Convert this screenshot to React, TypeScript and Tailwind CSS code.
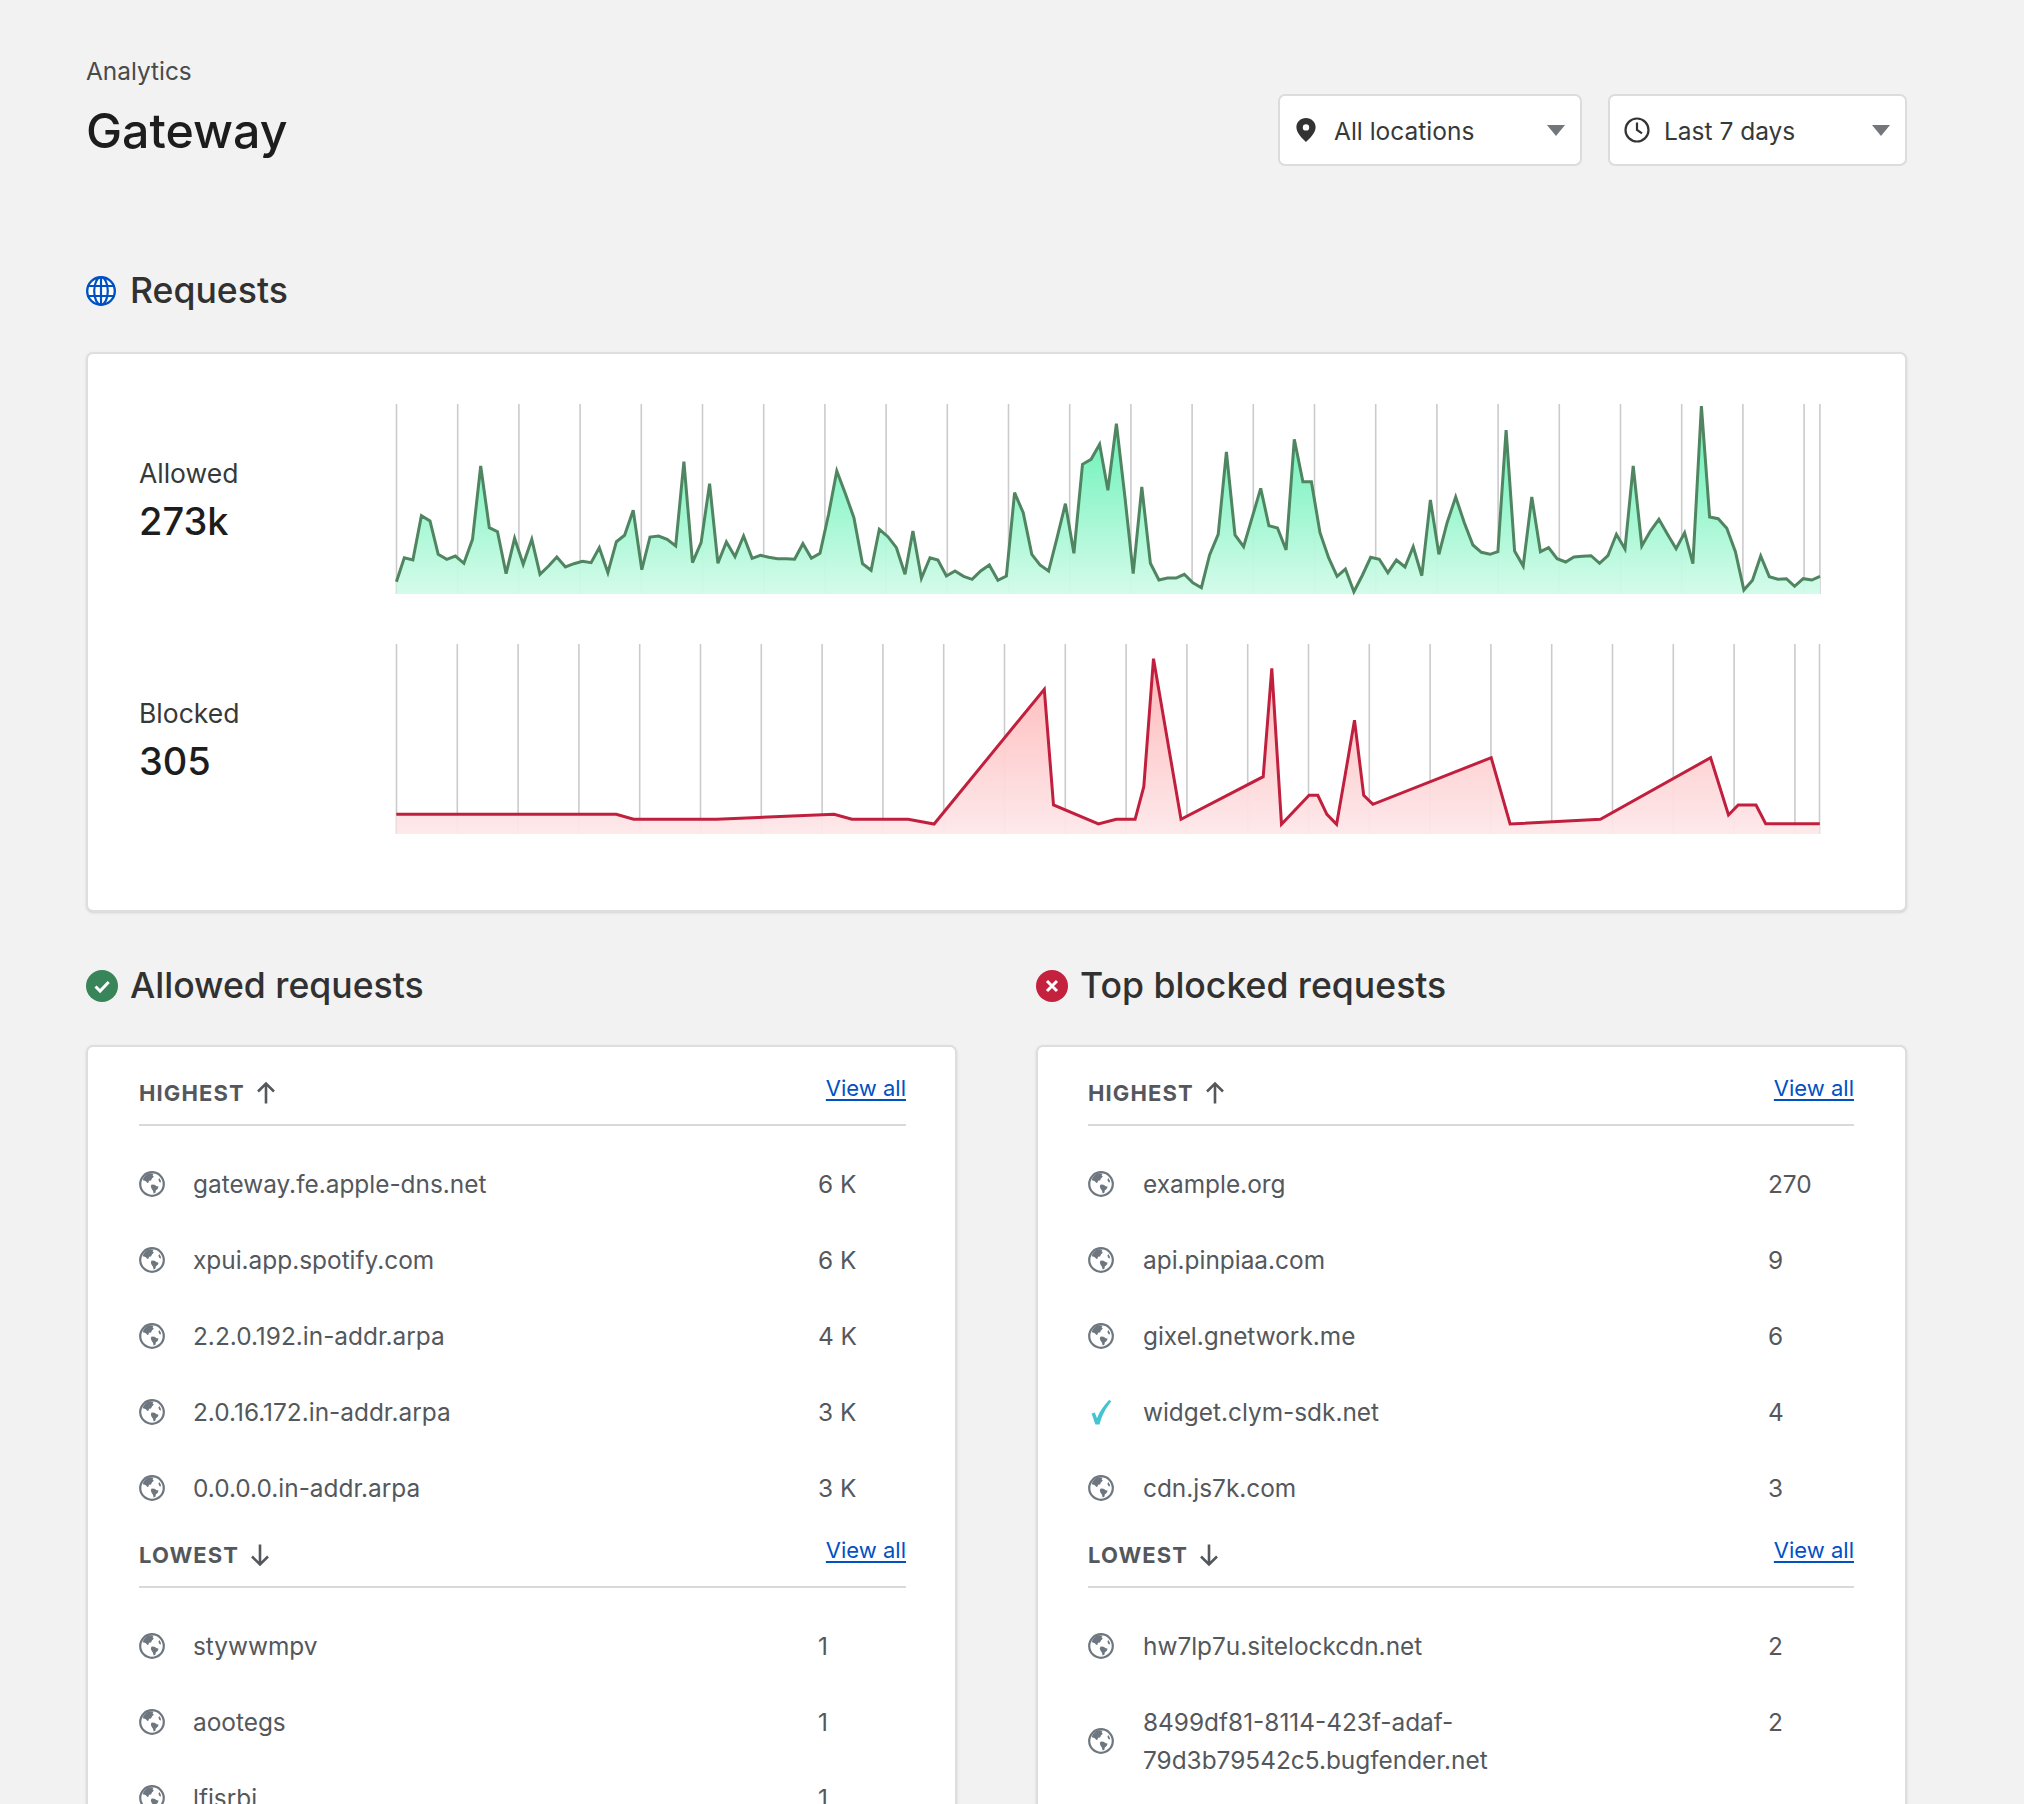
import React from "react";

type P = [number, number];

const GREEN_A: P[] = [[46,572],[68,500],[92,507],[116,374],[140,390],[163,490],[187,505],[211,495],[235,517],[259,445],[282,225],[306,410],[329,422],[353,548],[377,442],[401,520],[425,445],[448,550],[472,525],[495,498],[519,528],[543,518],[567,511],[591,515],[614,470],[638,545],[662,452],[685,433],[709,358],[733,536],[756,438],[780,435],[804,445],[828,465],[851,212],[875,515],[899,455],[923,278],[946,517],[970,453],[994,497],[1018,435],[1042,502],[1065,493],[1089,499],[1113,503],[1137,503],[1161,505],[1184,458],[1208,502],[1232,487],[1256,370],[1279,240],[1303,308],[1327,380],[1351,518],[1375,538],[1398,415],[1422,437],[1446,470],[1470,550],[1492,420],[1516,562],[1540,500]];
const GREEN_B: P[] = [[22,507],[46,555],[70,540],[94,556],[118,565],[142,540],[166,522],[190,568],[214,555],[237,305],[261,365],[285,490],[308,522],[332,540],[356,440],[379,338],[403,487],[427,220],[451,205],[475,160],[498,298],[522,98],[546,320],[569,548],[593,288],[617,517],[641,567],[665,561],[689,561],[712,550],[736,575],[760,590],[783,492],[807,430],[830,183],[854,432],[878,467],[902,380],[926,292],[949,404],[973,411],[997,477],[1020,145],[1044,272],[1068,272],[1092,425],[1116,500],[1140,556],[1163,534],[1187,602],[1211,552]];
const GREEN_C: P[] = [[2,499],[26,505],[50,545],[74,507],[98,528],[121,467],[145,554],[169,327],[193,490],[216,395],[240,318],[264,395],[288,462],[312,484],[336,490],[358,482],[381,117],[405,480],[429,525],[453,318],[477,482],[500,470],[524,503],[548,513],[571,498],[595,496],[619,494],[643,517],[666,494],[690,430],[714,474],[737,225],[761,465],[785,420],[809,385],[833,430],[857,473],[881,425],[904,518],[928,45],[951,378],[975,383],[999,412],[1023,482],[1047,597],[1071,568],[1094,495],[1118,557],[1142,565],[1166,563],[1189,586],[1213,563],[1237,567],[1260,556]];
const RED_A: P[] = [[32,550],[463,550],[497,565],[660,565],[890,550],[925,565],[1035,565],[1086,579],[1302,175],[1320,522],[1408,579],[1443,565],[1480,565],[1497,467],[1516,83]];
const RED_B: P[] = [[100,565],[261,437],[278,112],[297,580],[351,493],[368,493],[386,550],[405,580],[422,430],[440,268],[458,493],[476,520],[708,380],[745,579],[922,565],[1138,380],[1173,552],[1192,522],[1227,522],[1246,578],[1352,578]];

const conv = (pts: P[], ox: number, fx: number, oy: number, left: number, top: number): P[] =>
  pts.map(([x, y]) => [ox + x / fx - left, oy + y / 3 - top]);

const allowedPts: P[] = [
  ...conv(GREEN_A, 380, 2.8, 390, 396, 403),
  ...conv(GREEN_B, 930, 2.8, 390, 396, 403),
  ...conv(GREEN_C, 1370, 2.8, 390, 396, 403),
];
const blockedPts: P[] = [
  ...conv(RED_A, 380, 1.96, 630, 396, 643),
  ...conv(RED_B, 1130, 1.96, 630, 396, 643),
];

const allowedGrid = [0, 61.2, 122.4, 183.6, 244.8, 306, 367.2, 428.4, 489.6, 550.8, 612, 673.2, 734.4, 795.6, 856.8, 918, 979.2, 1040.4, 1101.6, 1162.8, 1224, 1285.2, 1346.4, 1407.6, 1423.4];
const blockedGrid = [0, 60.8, 121.6, 182.4, 243.2, 304, 364.8, 425.6, 486.4, 547.2, 608, 668.8, 729.6, 790.4, 851.2, 912, 972.8, 1033.6, 1094.4, 1155.2, 1216, 1276.8, 1337.6, 1398.4, 1423];

function Chart({ id, pts, grid, line, top, bottom }: { id: string; pts: P[]; grid: number[]; line: string; top: string; bottom: string }) {
  const d = pts.map(([x, y]) => `${x.toFixed(1)},${y.toFixed(1)}`).join(" ");
  const first = pts[0];
  const last = pts[pts.length - 1];
  return (
    <svg width="1424" height="190" viewBox="0 0 1424 190" className="block shrink-0 overflow-visible">
      <defs>
        <linearGradient id={id} gradientUnits="userSpaceOnUse" x1="0" y1="0" x2="0" y2="190">
          <stop offset="0" stopColor={top} />
          <stop offset="1" stopColor={bottom} />
        </linearGradient>
      </defs>
      {grid.map((x) => (
        <line key={x} x1={x + 0.5} x2={x + 0.5} y1="0" y2="190" stroke="#cbcbcb" strokeWidth="1.6" />
      ))}
      <polygon points={`${first[0]},190 ${d} ${last[0]},190`} fill={`url(#${id})`} fillOpacity="0.95" />
      <polyline points={d} fill="none" stroke={line} strokeWidth="3" strokeLinejoin="miter" />
    </svg>
  );
}

function Globe() {
  return (
    <svg width="26" height="26" viewBox="0 0 26 26" className="block">
      <circle cx="13" cy="13" r="11.8" fill="#fff" stroke="#6e777f" strokeWidth="2.2" />
      <path d="M9 2.5c2.4-.5 4.4-.4 5.6.2l-1 1.6 1.2 1.4-1.7 1.6-1.1 2.1-2 .3-.4 1.9L8.4 12 6.8 10.2 5 9.6l-1.4-.4C4.6 6.2 6.4 3.8 9 2.5z" fill="#6e777f" />
      <path d="M12.6 13.6l3 .2 2.2 1.4 1.7.3-.5 2.1-2.2 2-.4 2.2-1.8.8-.6-2.9-1.4-2-.8-2.3z" fill="#6e777f" />
      <path d="M20.4 7l1.2 2.2.5 2.4-1.7-.6-1-2.2z" fill="#6e777f" />
    </svg>
  );
}

function CyanCheck() {
  return (
    <svg width="26" height="26" viewBox="0 0 26 26" className="block">
      <path d="M3.6 14.6l3.2-1.2 2.2 5.8C11.4 13 15.4 6.8 21 1l2.4 1.2C17.8 9 14 16 11.6 25.4H7.4z" fill="#42c5d0" />
    </svg>
  );
}

function ArrowIcon({ down }: { down?: boolean }) {
  return (
    <svg width="20" height="24" viewBox="0 0 20 24" className={down ? "block rotate-180" : "block"}>
      <path d="M10 22.5V2.5M2 10.5l8-8 8 8" fill="none" stroke="#54585c" strokeWidth="2.6" />
    </svg>
  );
}

function Row({ name, value, right }: { name: string; value: string; right?: boolean }) {
  const cyan = name === "widget.clym-sdk.net";
  return (
    <div className="flex py-[19px] text-[24.4px] leading-[38px] text-[#54585c]">
      <div className={right ? "w-[55px] shrink-0 flex items-center" : "w-[54px] shrink-0 flex items-center"}>{cyan ? <CyanCheck /> : <Globe />}</div>
      <div className="flex-1 min-w-0 pr-[24px]">{name}</div>
      <div className={right ? "w-[86px] shrink-0" : "w-[88px] shrink-0"}>{value}</div>
    </div>
  );
}

function ListHead({ label, down }: { label: string; down?: boolean }) {
  return (
    <div className="h-[60px] border-b-2 border-[#d9d9d9] flex items-start justify-between pt-[13px]">
      <div className="flex items-center gap-[11px]">
        <span className="text-[22px] leading-[28px] font-bold tracking-[1.1px] text-[#54585c]">{label}</span>
        <ArrowIcon down={down} />
      </div>
      <a className="text-[22px] leading-[28px] text-[#0051c3] underline decoration-[#0051c3] underline-offset-[3px] -mt-[5px]">View all</a>
    </div>
  );
}

function ListCard({ high, low, right }: { high: [string, string][]; low: [string, string][]; right?: boolean }) {
  return (
    <div className={right
      ? "bg-white border-2 border-[#dedede] rounded-[7px] shadow-sm pl-[50px] pr-[51px] pt-[19px] h-[900px]"
      : "bg-white border-2 border-[#dedede] rounded-[7px] shadow-sm pl-[51px] pr-[49px] pt-[19px] h-[900px]"}>
      <ListHead label="HIGHEST" />
      <div className="pt-[20px]">
        {high.map(([n, v]) => <Row key={n} name={n} value={v} right={right} />)}
      </div>
      <div className="pt-[2px]">
        <ListHead label="LOWEST" down />
      </div>
      <div className="pt-[20px]">
        {low.map(([n, v]) => <Row key={n} name={n} value={v} right={right} />)}
      </div>
    </div>
  );
}

function Heading({ icon, children }: { icon: React.ReactNode; children: React.ReactNode }) {
  return (
    <div className="flex items-center h-[44px] text-[35.6px] leading-[44px] text-[#313131]">
      <div className="w-[45px] shrink-0 flex items-center">{icon}</div>
      <h2 className="font-[450] -ml-px">{children}</h2>
    </div>
  );
}

function Select({ icon, label, width }: { icon: React.ReactNode; label: string; width: string }) {
  return (
    <div className={`${width} h-[72px] bg-white border-2 border-[#dcdcdc] rounded-[7px] flex items-center pr-[15px] text-[24.5px] text-[#36393a]`}>
      <div className="w-[54px] shrink-0 flex items-center pl-[15px]">{icon}</div>
      <span className="flex-1 pt-[2px]">{label}</span>
      <svg width="18" height="11" viewBox="0 0 18 11" className="block"><path d="M0 0h18l-9 11z" fill="#72777c" /></svg>
    </div>
  );
}

export default function App() {
  return (
    <div className="bg-[#f2f2f2] h-[1804px] overflow-hidden font-[Inter,sans-serif]">
      <div className="ml-[86px] w-[1821px] pt-[52px]">
        <header className="flex justify-between items-start">
          <div>
            <div className="text-[24.4px] leading-[38px] text-[#4a4a4a]">Analytics</div>
            <h1 className="text-[48.3px] leading-[60px] font-[450] text-[#1d1d1d] mt-[11px]">Gateway</h1>
          </div>
          <div className="flex gap-[26px] mt-[42px]">
            <Select
              width="w-[304px]"
              label="All locations"
              icon={
                <svg width="20" height="24" viewBox="0 0 20 24" className="block translate-x-px">
                  <path fillRule="evenodd" d="M10 0c5.4 0 9.6 4 9.6 9.2C19.6 15.4 13 21 10 24 7 21 .4 15.4.4 9.2.4 4 4.6 0 10 0zm0 6.2a3.2 3.2 0 1 0 0 6.4 3.2 3.2 0 0 0 0-6.4z" fill="#333" />
                </svg>
              }
            />
            <Select
              width="w-[299px]"
              label="Last 7 days"
              icon={
                <svg width="26" height="26" viewBox="0 0 26 26" className="block -translate-x-px">
                  <circle cx="13" cy="13" r="11.5" fill="none" stroke="#333" strokeWidth="2.2" />
                  <path d="M13 5.5V13l5 3.4" fill="none" stroke="#333" strokeWidth="2.2" />
                </svg>
              }
            />
          </div>
        </header>

        <section className="mt-[103px]">
          <Heading
            icon={
              <svg width="30" height="30" viewBox="0 0 30 30" className="block">
                <circle cx="15" cy="15" r="13.8" fill="#fff" stroke="#0051c3" strokeWidth="2.4" />
                <ellipse cx="15" cy="15" rx="6.8" ry="13.8" fill="none" stroke="#0051c3" strokeWidth="2.2" />
                <path d="M15 1v28M1.5 10h27M1.5 20h27" fill="none" stroke="#0051c3" strokeWidth="2.2" />
              </svg>
            }
          >
            Requests
          </Heading>
          <div className="mt-[39px] h-[560px] bg-white border-2 border-[#dedede] rounded-[7px] shadow-sm pt-[50px] pl-[51px]">
            <div className="flex items-center">
              <div className="w-[257px] shrink-0">
                <div className="text-[26.5px] leading-[38px] text-[#36393a]">Allowed</div>
                <div className="text-[38px] leading-[46px] font-[450] mt-[6px] text-[#1d1d1d]">273k</div>
              </div>
              <Chart id="gA" pts={allowedPts} grid={allowedGrid} line="#4f8560" top="#55f0ae" bottom="#d2fbe9" />
            </div>
            <div className="flex items-center mt-[50px]">
              <div className="w-[257px] shrink-0">
                <div className="text-[26.5px] leading-[38px] text-[#36393a]">Blocked</div>
                <div className="text-[38px] leading-[46px] font-[450] mt-[6px] text-[#1d1d1d]">305</div>
              </div>
              <Chart id="gB" pts={blockedPts} grid={blockedGrid} line="#c0203e" top="#ffb0b0" bottom="#fde8ea" />
            </div>
          </div>
        </section>

        <div className="grid grid-cols-[871px_871px] gap-x-[79px] mt-[52px]">
          <section>
            <Heading
              icon={
                <svg width="32" height="32" viewBox="0 0 32 32" className="block">
                  <circle cx="16" cy="16" r="16" fill="#38855a" />
                  <path d="M9.5 16.5l4.6 4.5 8.6-9" fill="none" stroke="#fff" strokeWidth="3" />
                </svg>
              }
            >
              Allowed requests
            </Heading>
            <div className="mt-[37px]">
              <ListCard
                high={[["gateway.fe.apple-dns.net", "6 K"], ["xpui.app.spotify.com", "6 K"], ["2.2.0.192.in-addr.arpa", "4 K"], ["2.0.16.172.in-addr.arpa", "3 K"], ["0.0.0.0.in-addr.arpa", "3 K"]]}
                low={[["stywwmpv", "1"], ["aootegs", "1"], ["lfisrbi", "1"]]}
              />
            </div>
          </section>
          <section>
            <Heading
              icon={
                <svg width="32" height="32" viewBox="0 0 32 32" className="block">
                  <circle cx="16" cy="16" r="16" fill="#c4213f" />
                  <path d="M11 11l10 10M21 11L11 21" fill="none" stroke="#fff" strokeWidth="3" />
                </svg>
              }
            >
              Top blocked requests
            </Heading>
            <div className="mt-[37px]">
              <ListCard
                right
                high={[["example.org", "270"], ["api.pinpiaa.com", "9"], ["gixel.gnetwork.me", "6"], ["widget.clym-sdk.net", "4"], ["cdn.js7k.com", "3"]]}
                low={[["hw7lp7u.sitelockcdn.net", "2"], ["8499df81-8114-423f-adaf-79d3b79542c5.bugfender.net", "2"]]}
              />
            </div>
          </section>
        </div>
      </div>
    </div>
  );
}
